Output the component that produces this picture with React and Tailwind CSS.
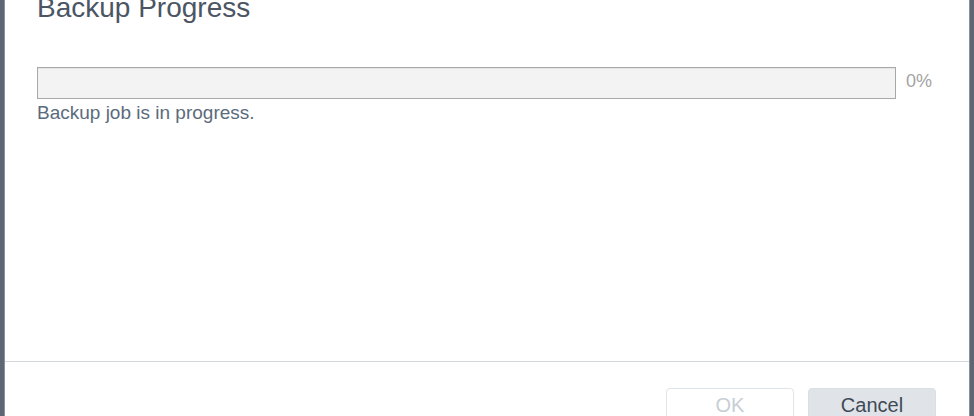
export default function App() {
  return (
    <div className="w-[974px] h-[416px] overflow-hidden flex bg-white" style={{ fontFamily: '"Liberation Sans", Arial, sans-serif' }}>
      <div className="w-[5px] shrink-0 bg-[#5d6672] border-r border-[#8a929c]" />

      <div className="flex-1 flex flex-col bg-white">
        {/* body */}
        <div className="h-[361px] shrink-0 pl-[32px]">
          <h2 className="-mt-[6px] text-[28px] leading-[28px] text-[#4b5563] font-normal">Backup Progress</h2>

          <div className="mt-[45px] flex items-center">
            <div className="w-[859px] h-[32px] border border-[#a8a8a8] bg-[#f3f3f3] shadow-[inset_0_1px_1px_rgba(0,0,0,0.06)]" />
            <span className="ml-[10px] mb-[4px] text-[18px] leading-[20px] text-[#a3a3a3]">0%</span>
          </div>

          <p className="mt-[3px] text-[19px] leading-[22px] text-[#5b6b7c]">Backup job is in progress.</p>
        </div>

        <div className="h-px shrink-0 bg-[#d2d7db]" />

        {/* footer */}
        <div className="shrink-0 flex justify-end gap-[14px] pt-[26px] pr-[33px]">
          <button
            disabled
            className="w-[128px] h-[34px] rounded-[4px] border border-[#dfe4e8] bg-white text-[20px] text-[#c6ced5]"
          >
            OK
          </button>
          <button className="w-[128px] h-[34px] rounded-[4px] border border-[#dadfe4] bg-[#e0e4e8] text-[20px] text-[#3e4a57]">
            Cancel
          </button>
        </div>
      </div>

      <div className="w-[5px] shrink-0 bg-[#5d6672] border-l border-[#8a929c]" />
    </div>
  );
}
